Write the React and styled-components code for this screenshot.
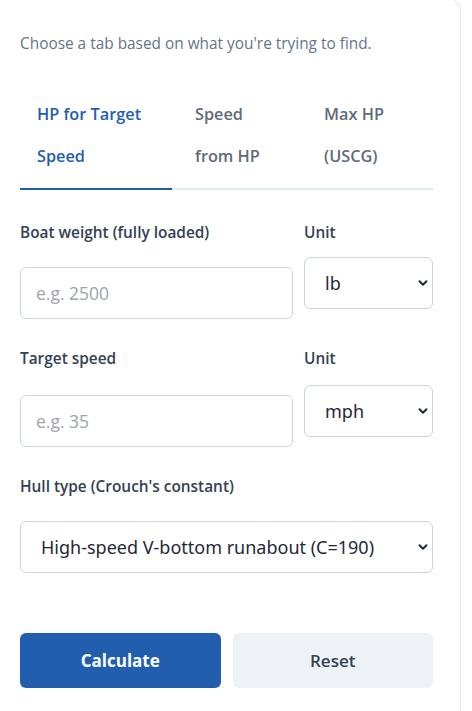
import React from "react";
import styled, { createGlobalStyle } from "styled-components";

const Global = createGlobalStyle`
  html, body { margin: 0; padding: 0; background: #fff; overflow: hidden; }
  body { font-family: "Open Sans", "Noto Sans", sans-serif; }
  * { box-sizing: border-box; }
`;

const Card = styled.div`
  width: 473px;
  margin-left: -12px;
  margin-top: -2px;
  min-height: 760px;
  border: 1px solid #e2e8f0;
  border-radius: 12px;
  padding: 33px 28px 0 31px;
  background: #fff;
`;

const Intro = styled.p`
  margin: 0 0 37px;
  font-size: 15.4px;
  line-height: 24px;
  color: #64748b;
`;

const TabList = styled.div`
  display: grid;
  grid-template-columns: 152px 129px 1fr;
  border-bottom: 2px solid #e2e8f0;
  width: 413px;
  margin-bottom: 33px;
`;

const Tab = styled.button`
  appearance: none;
  background: none;
  border: none;
  text-align: left;
  padding: 0 0 11px ${(p) => p.$pad}px;
  margin-bottom: -2px;
  border-bottom: 2px solid ${(p) => (p.$active ? "#1f5eae" : "transparent")};
  font-family: "Open Sans", "Noto Sans", sans-serif;
  font-size: 16.3px;
  font-weight: 600;
  line-height: 42px;
  color: ${(p) => (p.$active ? "#1f5eae" : "#5f6b7a")};
  cursor: pointer;
`;

const Row = styled.div`
  display: grid;
  grid-template-columns: 1fr 129px;
  column-gap: 11px;
  width: 413px;
  margin-bottom: ${(p) => p.$mb || 0}px;
`;

const Field = styled.div`
  display: flex;
  flex-direction: column;
  width: ${(p) => (p.$full ? "413px" : "auto")};
`;

const Label = styled.label`
  font-size: 15.4px;
  font-weight: 600;
  line-height: 20px;
  color: #334155;
  margin-bottom: ${(p) => p.$gap}px;
`;

const Input = styled.input`
  height: 52px;
  width: 100%;
  border: 1px solid #cbd5e1;
  border-radius: 6px;
  padding: 0 15px;
  font-family: "Open Sans", "Noto Sans", sans-serif;
  font-size: 17.5px;
  color: #1e293b;
  background: #fff;
  outline: none;
  &::placeholder { color: #9ca3af; }
`;

const SelectWrap = styled.div`
  position: relative;
  width: 100%;
`;

const Select = styled.select`
  appearance: none;
  -webkit-appearance: none;
  width: 100%;
  height: 52px;
  border: 1px solid #cbd5e1;
  border-radius: 6px;
  padding: 0 30px 0 20px;
  font-family: "Noto Sans", "Open Sans", sans-serif;
  font-size: 18px;
  color: #1f2937;
  background: #fff;
  outline: none;
`;

const Chevron = styled.svg`
  position: absolute;
  right: 5px;
  top: 50%;
  transform: translateY(-50%);
  pointer-events: none;
`;

const Buttons = styled.div`
  display: grid;
  grid-template-columns: 1fr 1fr;
  column-gap: 12px;
  width: 413px;
  margin-top: 60px;
`;

const Button = styled.button`
  height: 55px;
  border: none;
  border-radius: 6px;
  font-family: "Open Sans", "Noto Sans", sans-serif;
  font-size: 17px;
  font-weight: ${(p) => (p.$primary ? 700 : 600)};
  color: ${(p) => (p.$primary ? "#fff" : "#334155")};
  background: ${(p) => (p.$primary ? "#215eae" : "#eef1f6")};
  cursor: pointer;
`;

const Caret = () => (
  <Chevron width="10" height="7" viewBox="0 0 10 7">
    <path d="M1.5 1.8 L5 5.2 L8.5 1.8" fill="none" stroke="#1f2937" strokeWidth="2" strokeLinecap="round" strokeLinejoin="round" />
  </Chevron>
);

function Dropdown({ value, options }) {
  return (
    <SelectWrap>
      <Select defaultValue={value}>
        {options.map((o) => (
          <option key={o}>{o}</option>
        ))}
      </Select>
      <Caret />
    </SelectWrap>
  );
}

export default function App() {
  return (
    <>
      <Global />
      <Card>
        <Intro>Choose a tab based on what you're trying to find.</Intro>
        <TabList>
          <Tab $active $pad={17}>HP for Target<br />Speed</Tab>
          <Tab $pad={23}>Speed<br />from HP</Tab>
          <Tab $pad={23}>Max HP<br />(USCG)</Tab>
        </TabList>

        <Row $mb={30}>
          <Field>
            <Label $gap={24}>Boat weight (fully loaded)</Label>
            <Input placeholder="e.g. 2500" />
          </Field>
          <Field>
            <Label $gap={14}>Unit</Label>
            <Dropdown value="lb" options={["lb", "kg"]} />
          </Field>
        </Row>

        <Row $mb={30}>
          <Field>
            <Label $gap={26}>Target speed</Label>
            <Input placeholder="e.g. 35" />
          </Field>
          <Field>
            <Label $gap={16}>Unit</Label>
            <Dropdown value="mph" options={["mph", "knots", "km/h"]} />
          </Field>
        </Row>

        <Field $full>
          <Label $gap={24}>Hull type (Crouch's constant)</Label>
          <Dropdown
            value="High-speed V-bottom runabout (C=190)"
            options={["High-speed V-bottom runabout (C=190)", "Average runabout (C=150)"]}
          />
        </Field>

        <Buttons>
          <Button $primary>Calculate</Button>
          <Button>Reset</Button>
        </Buttons>
      </Card>
    </>
  );
}
